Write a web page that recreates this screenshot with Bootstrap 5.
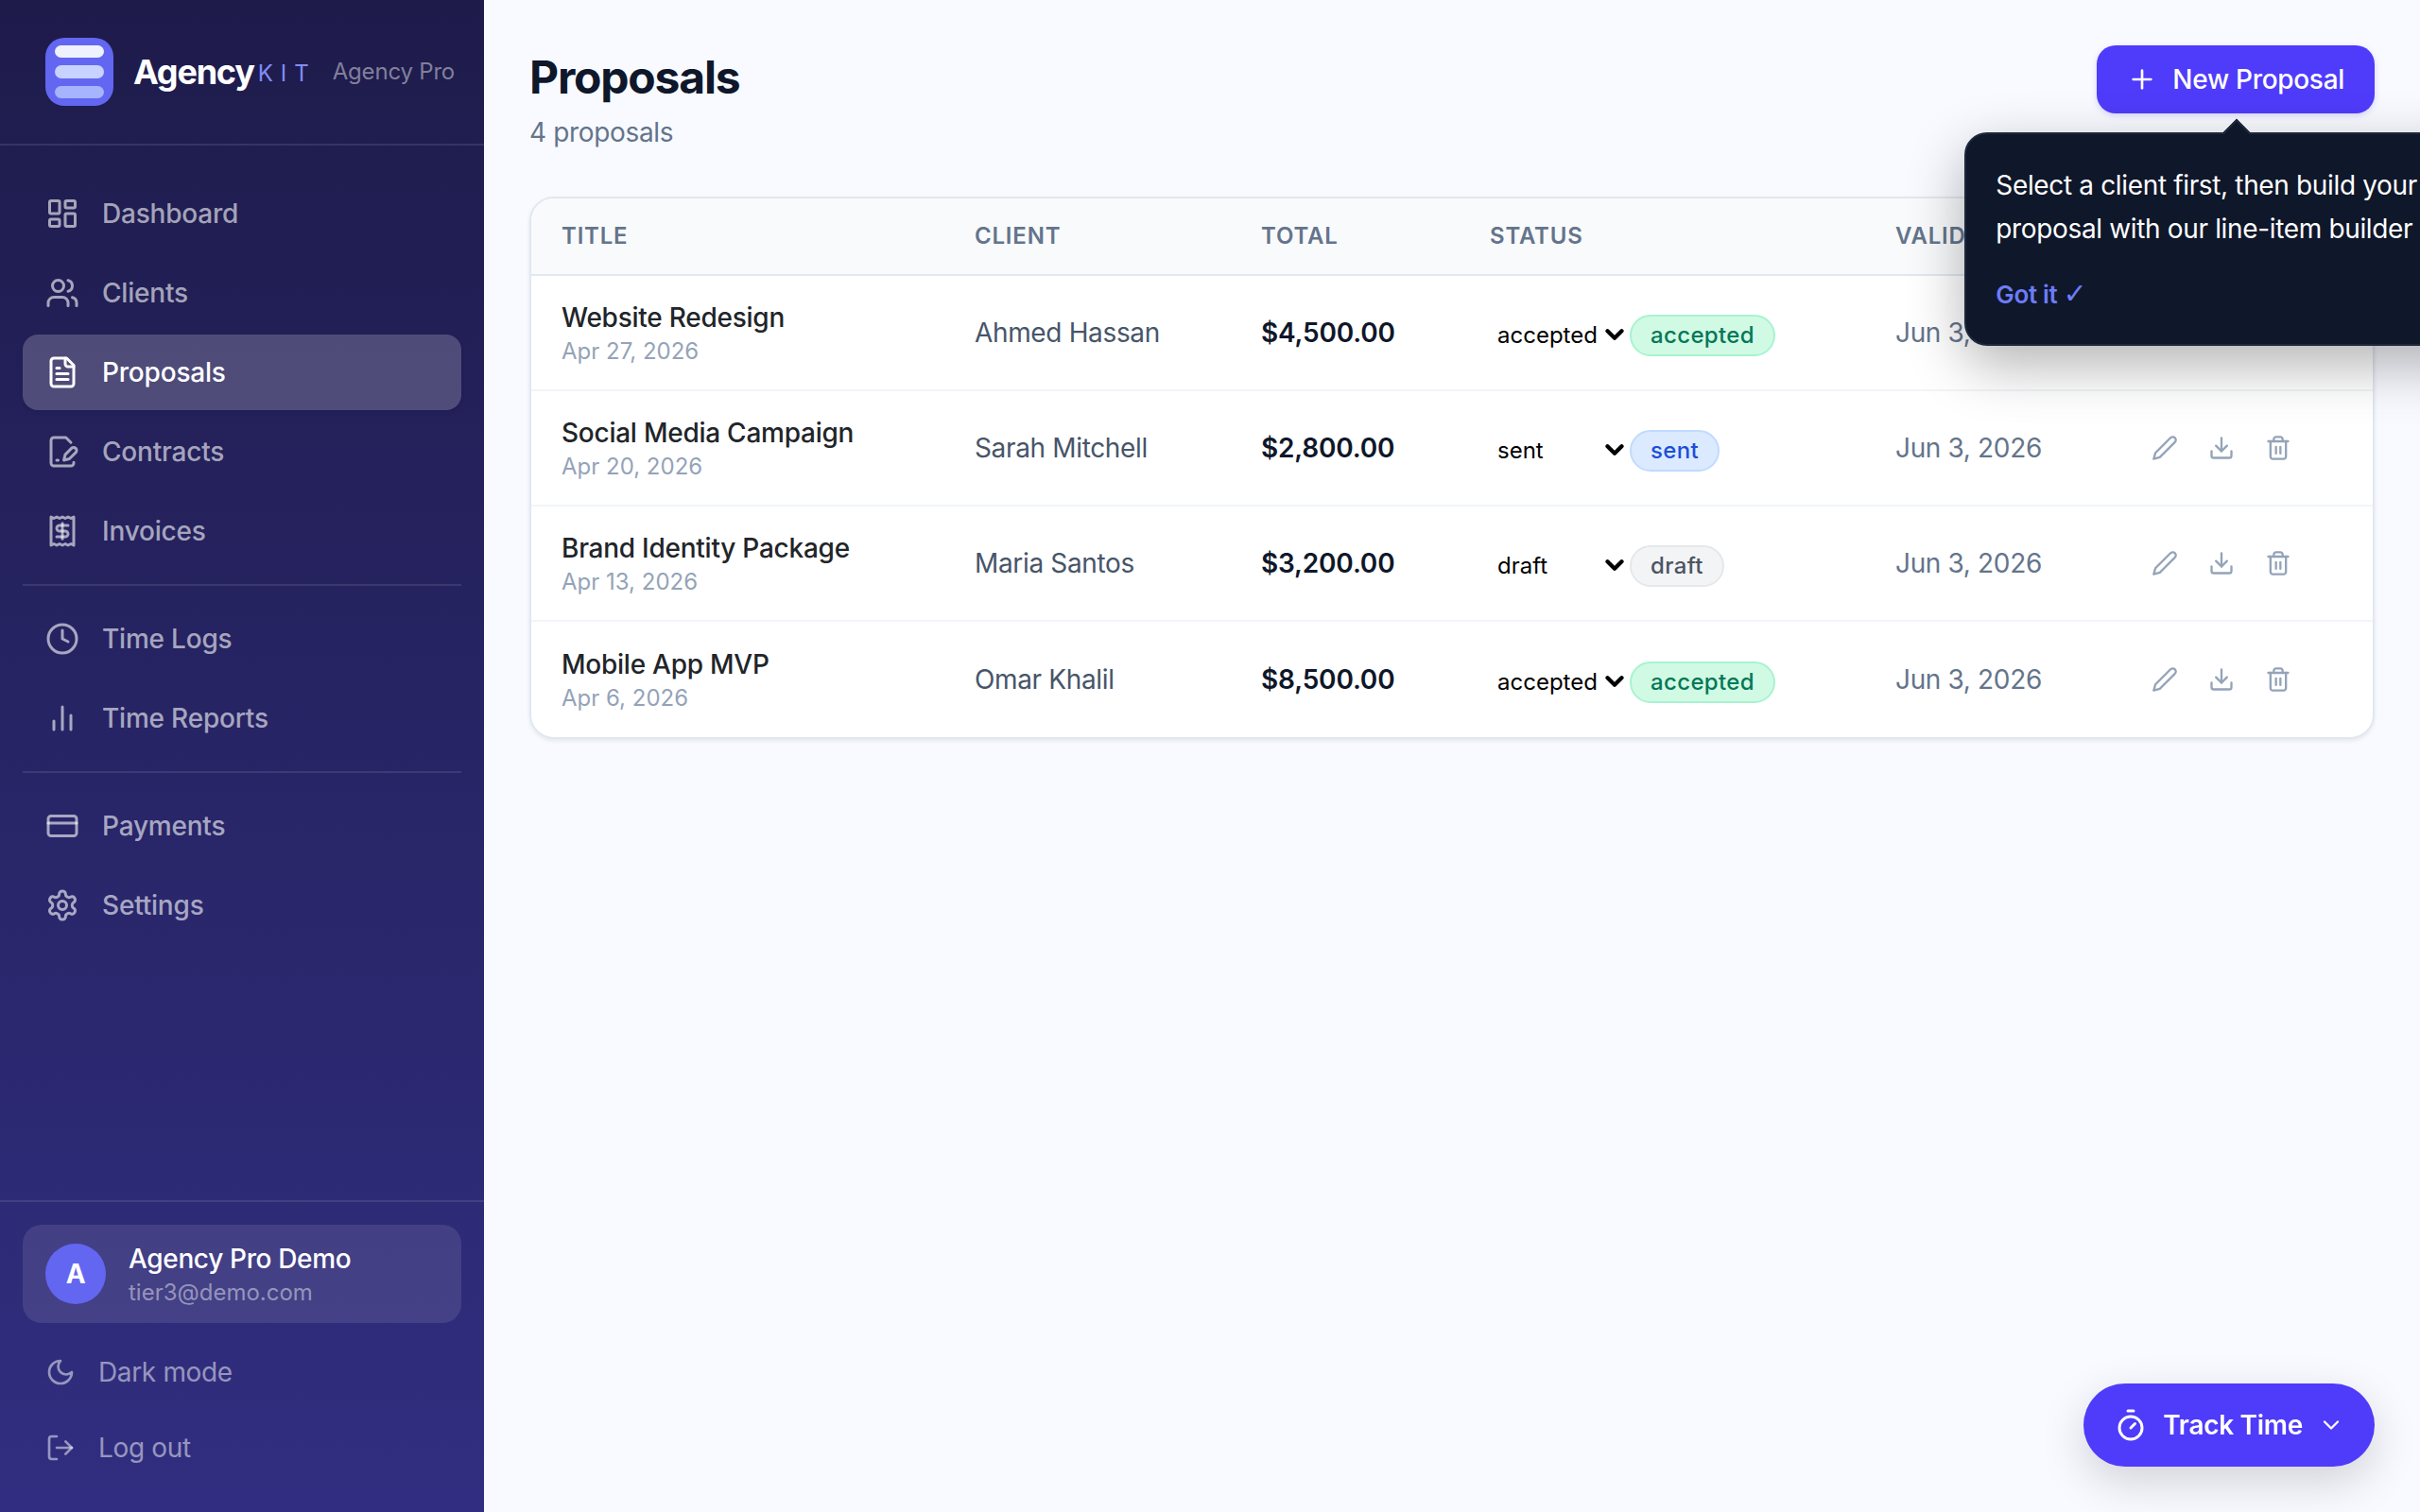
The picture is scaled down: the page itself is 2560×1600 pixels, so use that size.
<!DOCTYPE html>
<html lang="en">
<head>
    <meta charset="UTF-8">
    <meta name="viewport" content="width=device-width, initial-scale=1.0">
    <title>Proposals - AgencyKit</title>
    <link href="https://cdn.jsdelivr.net/npm/bootstrap@5.3.2/dist/css/bootstrap.min.css" rel="stylesheet">
    <style>
        html, body { height: 100%; overflow: hidden; }
        body { font-family: Inter, "Liberation Sans", sans-serif; font-size: 28px; letter-spacing: -.35px; background: #f8faff; color: #0f172a; }
        .ico { fill: none; stroke: currentColor; stroke-width: 2; stroke-linecap: round; stroke-linejoin: round; flex: none; }

        /* sidebar */
        .side { width: 512px; height: 100vh; flex: none; background: linear-gradient(180deg, #1e1b4b, #312e81); }
        .brand { height: 154px; padding: 0 0 0 48px; border-bottom: 2px solid rgba(255,255,255,.1); }
        .brand-logo { width: 72px; height: 72px; padding: 8px 10px; gap: 8px; border-radius: 20px; background: #6366f1; flex: none; }
        .brand-logo span { height: 14px; border-radius: 7px; display: block; }
        .brand-name { margin-left: 21px; font-size: 36px; font-weight: 700; letter-spacing: -1.2px; color: #fff; line-height: 1; }
        .brand-kit { margin-left: 4px; font-size: 24px; letter-spacing: 8px; color: #818cf8; line-height: 1; margin-top: 3px; }
        .brand-tier { margin-left: 17px; font-size: 24px; letter-spacing: -.2px; color: rgba(255,255,255,.45); white-space: nowrap; }
        .side-nav { padding: 32px 24px 0; }
        .side-link { height: 80px; margin-bottom: 4px; padding: 0 24px; gap: 24px; border-radius: 16px; color: rgba(255,255,255,.6); text-decoration: none; font-weight: 500; letter-spacing: -.2px; }
        .side-link.active { background: rgba(255,255,255,.2); color: #fff; box-shadow: 0 2px 4px rgba(0,0,0,.08); }
        .side-sep { height: 2px; margin: 16px 0; background: rgba(255,255,255,.1); }
        .side-foot { padding: 24px 24px 28px; border-top: 2px solid rgba(255,255,255,.1); }
        .user-box { height: 104px; padding: 0 24px; gap: 24px; border-radius: 20px; background: rgba(255,255,255,.1); margin-bottom: 12px; }
        .user-pic { width: 64px; height: 64px; border-radius: 50%; background: #6366f1; color: #fff; font-weight: 700; }
        .user-info { padding-top: 4px; }
        .user-name { color: #fff; font-weight: 500; line-height: 36px; }
        .user-mail { color: rgba(255,255,255,.45); font-size: 24px; letter-spacing: 0; line-height: 36px; }
        .foot-link { height: 80px; padding: 0 24px; gap: 24px; color: rgba(255,255,255,.5); text-decoration: none; }

        /* main */
        .main-area { padding: 48px; min-width: 0; }
        .page-head { margin-bottom: 48px; }
        .page-title { font-size: 48px; line-height: 68px; font-weight: 700; margin: 0 0 4px; letter-spacing: -1.2px; }
        .page-sub { color: #64748b; line-height: 40px; }
        .new-btn { height: 72px; padding: 0 32px; gap: 16px; font-size: 28px; font-weight: 500; letter-spacing: -.3px; color: #fff; background: #4f3bfa; border: 0; border-radius: 20px; box-shadow: 0 2px 6px rgba(79,59,250,.2); }
        .new-btn:hover { color: #fff; background: #4f3bfa; }

        /* table */
        .prop-card { border: 2px solid #e2e8f0; border-radius: 26px; overflow: hidden; box-shadow: 0 2px 4px rgba(15,23,42,.08); }
        .prop-table { table-layout: fixed; font-size: 28px; }
        .prop-table th { height: 81px; padding: 0 0 0 32px; background: #f8fafc; color: #64748b; font-size: 24px; font-weight: 600; letter-spacing: .8px; text-transform: uppercase; border-bottom: 2px solid #e2e8f0; vertical-align: middle; }
        .prop-table td { height: 122px; padding: 0 0 0 32px; border-bottom: 2px solid #f1f5f9; vertical-align: middle; }
        .prop-table tr:last-child td { border-bottom: 0; height: 123px; }
        .prop-table .c-title { width: 437px; }
        .prop-table .c-client { width: 303px; }
        .prop-table .c-total { width: 242px; }
        .prop-table .c-status { width: 429px; }
        .prop-table .c-valid { width: 255px; }
        .row-name { font-weight: 500; letter-spacing: -.25px; line-height: 36px; margin-top: 3px; }
        .row-date { font-size: 24px; letter-spacing: 0; line-height: 36px; color: #94a3b8; }
        .row-client { color: #475569; }
        .row-total { font-weight: 600; letter-spacing: -.18px; color: #0f172a; }
        .row-valid { color: #64748b; white-space: nowrap; }
        .status-wrap { gap: 4px; padding-top: 6px; }
        .status-pick { width: 144px; height: 44px; padding: 0 0 0 8px; border: 0; border-radius: 0; font-size: 24px; letter-spacing: 0; color: #000; background-color: transparent; background-position: right 2px top 11px; background-size: 20px 20px; background-image: url("data:image/svg+xml,%3csvg xmlns='http://www.w3.org/2000/svg' viewBox='0 0 16 16'%3e%3cpath fill='none' stroke='%23000' stroke-linecap='round' stroke-linejoin='round' stroke-width='3.4' d='m2 5 6 6 6-6'/%3e%3c/svg%3e"); box-shadow: none; }
        .status-pill { height: 44px; padding: 0 20px; border-radius: 22px; border: 2px solid; font-size: 24px; font-weight: 500; letter-spacing: .35px; line-height: 40px; }
        .pill-accepted { background: #d1fae5; border-color: #a7f3d0; color: #047857; }
        .pill-sent { background: #dbeafe; border-color: #bfdbfe; color: #1d4ed8; }
        .pill-draft { background: #f3f4f6; border-color: #e5e7eb; color: #4b5563; }
        .act-btn { padding: 0 16px; border: 0; background: none; color: #94a3b8; line-height: 0; }

        /* onboarding tip */
        .tip-box { position: absolute; top: 92px; left: -140px; width: 600px; padding: 31px 32px 32px 31px; background: #0f172a; border: 2px solid #1e293b; border-radius: 24px; color: #fff; box-shadow: 0 20px 60px rgba(0,0,0,.3); z-index: 20; }
        .tip-box::before { content: ""; position: absolute; top: -12px; left: 276px; width: 20px; height: 20px; background: #0f172a; border-left: 2px solid #1e293b; border-top: 2px solid #1e293b; transform: rotate(45deg); }
        .tip-text { line-height: 46px; margin-bottom: 25px; }
        .tip-ok { padding: 0; border: 0; background: none; color: #6d7cf7; font-size: 26px; font-weight: 600; letter-spacing: -.35px; line-height: 36px; }
        .tip-tick { font-family: "DejaVu Sans", sans-serif; font-size: 30px; font-weight: 400; line-height: 1; }

        .track-btn { position: fixed; right: 48px; bottom: 48px; height: 88px; padding: 0 32px; gap: 16px; border: 0; border-radius: 44px; background: #4f3bfa; color: #fff; font-size: 28px; font-weight: 600; letter-spacing: -.3px; box-shadow: 0 16px 48px rgba(0,0,0,.16); }
    </style>
</head>
<body>
    <svg class="d-none">
        <symbol id="i-dash" viewBox="0 0 24 24"><rect width="7" height="9" x="3" y="3" rx="1"/><rect width="7" height="5" x="14" y="3" rx="1"/><rect width="7" height="9" x="14" y="12" rx="1"/><rect width="7" height="5" x="3" y="16" rx="1"/></symbol>
        <symbol id="i-users" viewBox="0 0 24 24"><path d="M16 21v-2a4 4 0 0 0-4-4H6a4 4 0 0 0-4 4v2"/><circle cx="9" cy="7" r="4"/><path d="M22 21v-2a4 4 0 0 0-3-3.87"/><path d="M16 3.13a4 4 0 0 1 0 7.75"/></symbol>
        <symbol id="i-file" viewBox="0 0 24 24"><path d="M15 2H6a2 2 0 0 0-2 2v16a2 2 0 0 0 2 2h12a2 2 0 0 0 2-2V7Z"/><path d="M14 2v4a2 2 0 0 0 2 2h4"/><path d="M10 9H8"/><path d="M16 13H8"/><path d="M16 17H8"/></symbol>
        <symbol id="i-sign" viewBox="0 0 24 24"><path d="M20 19.5v.5a2 2 0 0 1-2 2H6a2 2 0 0 1-2-2V4a2 2 0 0 1 2-2h8.5L18 5.5"/><path d="M8 18h1"/><path d="M18.42 9.61a2.1 2.1 0 1 1 2.97 2.97L16.95 17 13 18l.99-3.95 4.43-4.44Z"/></symbol>
        <symbol id="i-receipt" viewBox="0 0 24 24"><path d="M4 2v20l2-1 2 1 2-1 2 1 2-1 2 1 2-1 2 1V2l-2 1-2-1-2 1-2-1-2 1-2-1-2 1Z"/><path d="M16 8h-6a2 2 0 1 0 0 4h4a2 2 0 1 1 0 4H8"/><path d="M12 17.5v-11"/></symbol>
        <symbol id="i-clock" viewBox="0 0 24 24"><circle cx="12" cy="12" r="10"/><path d="M12 6v6l4 2"/></symbol>
        <symbol id="i-bars" viewBox="0 0 24 24"><path d="M18 20V10"/><path d="M12 20V4"/><path d="M6 20v-6"/></symbol>
        <symbol id="i-card" viewBox="0 0 24 24"><rect width="20" height="14" x="2" y="5" rx="2"/><path d="M2 10h20"/></symbol>
        <symbol id="i-gear" viewBox="0 0 24 24"><path d="M12.22 2h-.44a2 2 0 0 0-2 2v.18a2 2 0 0 1-1 1.73l-.43.25a2 2 0 0 1-2 0l-.15-.08a2 2 0 0 0-2.73.73l-.22.38a2 2 0 0 0 .73 2.73l.15.1a2 2 0 0 1 1 1.72v.51a2 2 0 0 1-1 1.74l-.15.09a2 2 0 0 0-.73 2.73l.22.38a2 2 0 0 0 2.73.73l.15-.08a2 2 0 0 1 2 0l.43.25a2 2 0 0 1 1 1.73V20a2 2 0 0 0 2 2h.44a2 2 0 0 0 2-2v-.18a2 2 0 0 1 1-1.73l.43-.25a2 2 0 0 1 2 0l.15.08a2 2 0 0 0 2.73-.73l.22-.39a2 2 0 0 0-.73-2.73l-.15-.08a2 2 0 0 1-1-1.74v-.5a2 2 0 0 1 1-1.74l.15-.09a2 2 0 0 0 .73-2.73l-.22-.38a2 2 0 0 0-2.73-.73l-.15.08a2 2 0 0 1-2 0l-.43-.25a2 2 0 0 1-1-1.73V4a2 2 0 0 0-2-2z"/><circle cx="12" cy="12" r="3"/></symbol>
        <symbol id="i-moon" viewBox="0 0 24 24"><path d="M12 3a6 6 0 0 0 9 9 9 9 0 1 1-9-9Z"/></symbol>
        <symbol id="i-logout" viewBox="0 0 24 24"><path d="M9 21H5a2 2 0 0 1-2-2V5a2 2 0 0 1 2-2h4"/><path d="m16 17 5-5-5-5"/><path d="M21 12H9"/></symbol>
        <symbol id="i-pencil" viewBox="0 0 24 24"><path d="M17 3a2.85 2.83 0 1 1 4 4L7.5 20.5 2 22l1.5-5.5Z"/></symbol>
        <symbol id="i-down" viewBox="0 0 24 24"><path d="M21 15v4a2 2 0 0 1-2 2H5a2 2 0 0 1-2-2v-4"/><path d="m7 10 5 5 5-5"/><path d="M12 15V3"/></symbol>
        <symbol id="i-trash" viewBox="0 0 24 24"><path d="M3 6h18"/><path d="M19 6v14c0 1-1 2-2 2H7c-1 0-2-1-2-2V6"/><path d="M8 6V4c0-1 1-2 2-2h4c1 0 2 1 2 2v2"/><path d="M10 11v6"/><path d="M14 11v6"/></symbol>
        <symbol id="i-plus" viewBox="0 0 24 24"><path d="M5 12h14"/><path d="M12 5v14"/></symbol>
        <symbol id="i-timer" viewBox="0 0 24 24"><path d="M10 2h4"/><path d="m12 14 3-3"/><circle cx="12" cy="14" r="8"/></symbol>
        <symbol id="i-chev" viewBox="0 0 24 24"><path d="m6 9 6 6 6-6"/></symbol>
    </svg>

    <div class="d-flex vh-100">
        <aside class="side d-flex flex-column">
            <div class="brand d-flex align-items-center">
                <div class="brand-logo d-flex flex-column">
                    <span style="background:#eef2ff"></span>
                    <span style="background:#c7d2fe"></span>
                    <span style="background:#a5b4fc"></span>
                </div>
                <span class="brand-name">Agency</span>
                <span class="brand-kit">KIT</span>
                <span class="brand-tier">Agency Pro</span>
            </div>

            <nav class="side-nav flex-grow-1">
                <a href="#" class="side-link d-flex align-items-center"><svg class="ico" width="36" height="36"><use href="#i-dash"/></svg>Dashboard</a>
                <a href="#" class="side-link d-flex align-items-center"><svg class="ico" width="36" height="36"><use href="#i-users"/></svg>Clients</a>
                <a href="#" class="side-link active d-flex align-items-center"><svg class="ico" width="36" height="36"><use href="#i-file"/></svg>Proposals</a>
                <a href="#" class="side-link d-flex align-items-center"><svg class="ico" width="36" height="36"><use href="#i-sign"/></svg>Contracts</a>
                <a href="#" class="side-link d-flex align-items-center"><svg class="ico" width="36" height="36"><use href="#i-receipt"/></svg>Invoices</a>
                <div class="side-sep"></div>
                <a href="#" class="side-link d-flex align-items-center"><svg class="ico" width="36" height="36"><use href="#i-clock"/></svg>Time Logs</a>
                <a href="#" class="side-link d-flex align-items-center"><svg class="ico" width="36" height="36"><use href="#i-bars"/></svg>Time Reports</a>
                <div class="side-sep"></div>
                <a href="#" class="side-link d-flex align-items-center"><svg class="ico" width="36" height="36"><use href="#i-card"/></svg>Payments</a>
                <a href="#" class="side-link d-flex align-items-center"><svg class="ico" width="36" height="36"><use href="#i-gear"/></svg>Settings</a>
            </nav>

            <div class="side-foot">
                <div class="user-box d-flex align-items-center">
                    <div class="user-pic d-flex align-items-center justify-content-center flex-shrink-0">A</div>
                    <div class="user-info">
                        <div class="user-name">Agency Pro Demo</div>
                        <div class="user-mail">tier3@demo.com</div>
                    </div>
                </div>
                <a href="#" class="foot-link d-flex align-items-center"><svg class="ico" width="32" height="32"><use href="#i-moon"/></svg>Dark mode</a>
                <a href="#" class="foot-link d-flex align-items-center"><svg class="ico" width="32" height="32"><use href="#i-logout"/></svg>Log out</a>
            </div>
        </aside>

        <main class="main-area flex-grow-1">
            <div class="page-head d-flex justify-content-between align-items-start">
                <div>
                    <h1 class="page-title">Proposals</h1>
                    <div class="page-sub">4 proposals</div>
                </div>
                <div class="position-relative">
                    <button type="button" class="btn new-btn d-flex align-items-center"><svg class="ico" width="32" height="32"><use href="#i-plus"/></svg>New Proposal</button>
                    <div class="tip-box">
                        <div class="tip-text">Select a client first, then build your proposal with our line-item builder</div>
                        <button type="button" class="tip-ok">Got it <span class="tip-tick">✓</span></button>
                    </div>
                </div>
            </div>

            <div class="card prop-card">
                <table class="table prop-table mb-0">
                    <thead>
                        <tr>
                            <th class="c-title">Title</th>
                            <th class="c-client">Client</th>
                            <th class="c-total">Total</th>
                            <th class="c-status">Status</th>
                            <th class="c-valid">Valid until</th>
                            <th></th>
                        </tr>
                    </thead>
                    <tbody>
                        <tr>
                            <td><div class="row-name">Website Redesign</div><div class="row-date">Apr 27, 2026</div></td>
                            <td class="row-client">Ahmed Hassan</td>
                            <td class="row-total">$4,500.00</td>
                            <td><div class="status-wrap d-flex align-items-center">
                                <select class="form-select status-pick"><option selected>accepted</option><option>sent</option><option>draft</option></select>
                                <span class="status-pill pill-accepted">accepted</span>
                            </div></td>
                            <td class="row-valid">Jun 3, 2026</td>
                            <td><div class="d-flex"><button class="act-btn"><svg class="ico" width="28" height="28"><use href="#i-pencil"/></svg></button><button class="act-btn"><svg class="ico" width="28" height="28"><use href="#i-down"/></svg></button><button class="act-btn"><svg class="ico" width="28" height="28"><use href="#i-trash"/></svg></button></div></td>
                        </tr>
                        <tr>
                            <td><div class="row-name">Social Media Campaign</div><div class="row-date">Apr 20, 2026</div></td>
                            <td class="row-client">Sarah Mitchell</td>
                            <td class="row-total">$2,800.00</td>
                            <td><div class="status-wrap d-flex align-items-center">
                                <select class="form-select status-pick"><option>accepted</option><option selected>sent</option><option>draft</option></select>
                                <span class="status-pill pill-sent">sent</span>
                            </div></td>
                            <td class="row-valid">Jun 3, 2026</td>
                            <td><div class="d-flex"><button class="act-btn"><svg class="ico" width="28" height="28"><use href="#i-pencil"/></svg></button><button class="act-btn"><svg class="ico" width="28" height="28"><use href="#i-down"/></svg></button><button class="act-btn"><svg class="ico" width="28" height="28"><use href="#i-trash"/></svg></button></div></td>
                        </tr>
                        <tr>
                            <td><div class="row-name">Brand Identity Package</div><div class="row-date">Apr 13, 2026</div></td>
                            <td class="row-client">Maria Santos</td>
                            <td class="row-total">$3,200.00</td>
                            <td><div class="status-wrap d-flex align-items-center">
                                <select class="form-select status-pick"><option>accepted</option><option>sent</option><option selected>draft</option></select>
                                <span class="status-pill pill-draft">draft</span>
                            </div></td>
                            <td class="row-valid">Jun 3, 2026</td>
                            <td><div class="d-flex"><button class="act-btn"><svg class="ico" width="28" height="28"><use href="#i-pencil"/></svg></button><button class="act-btn"><svg class="ico" width="28" height="28"><use href="#i-down"/></svg></button><button class="act-btn"><svg class="ico" width="28" height="28"><use href="#i-trash"/></svg></button></div></td>
                        </tr>
                        <tr>
                            <td><div class="row-name">Mobile App MVP</div><div class="row-date">Apr 6, 2026</div></td>
                            <td class="row-client">Omar Khalil</td>
                            <td class="row-total">$8,500.00</td>
                            <td><div class="status-wrap d-flex align-items-center">
                                <select class="form-select status-pick"><option selected>accepted</option><option>sent</option><option>draft</option></select>
                                <span class="status-pill pill-accepted">accepted</span>
                            </div></td>
                            <td class="row-valid">Jun 3, 2026</td>
                            <td><div class="d-flex"><button class="act-btn"><svg class="ico" width="28" height="28"><use href="#i-pencil"/></svg></button><button class="act-btn"><svg class="ico" width="28" height="28"><use href="#i-down"/></svg></button><button class="act-btn"><svg class="ico" width="28" height="28"><use href="#i-trash"/></svg></button></div></td>
                        </tr>
                    </tbody>
                </table>
            </div>
        </main>
    </div>

    <button type="button" class="track-btn d-flex align-items-center"><svg class="ico" width="36" height="36"><use href="#i-timer"/></svg>Track Time<svg class="ico" width="28" height="28"><use href="#i-chev"/></svg></button>

    <script src="https://cdn.jsdelivr.net/npm/bootstrap@5.3.2/dist/js/bootstrap.bundle.min.js"></script>
</body>
</html>
